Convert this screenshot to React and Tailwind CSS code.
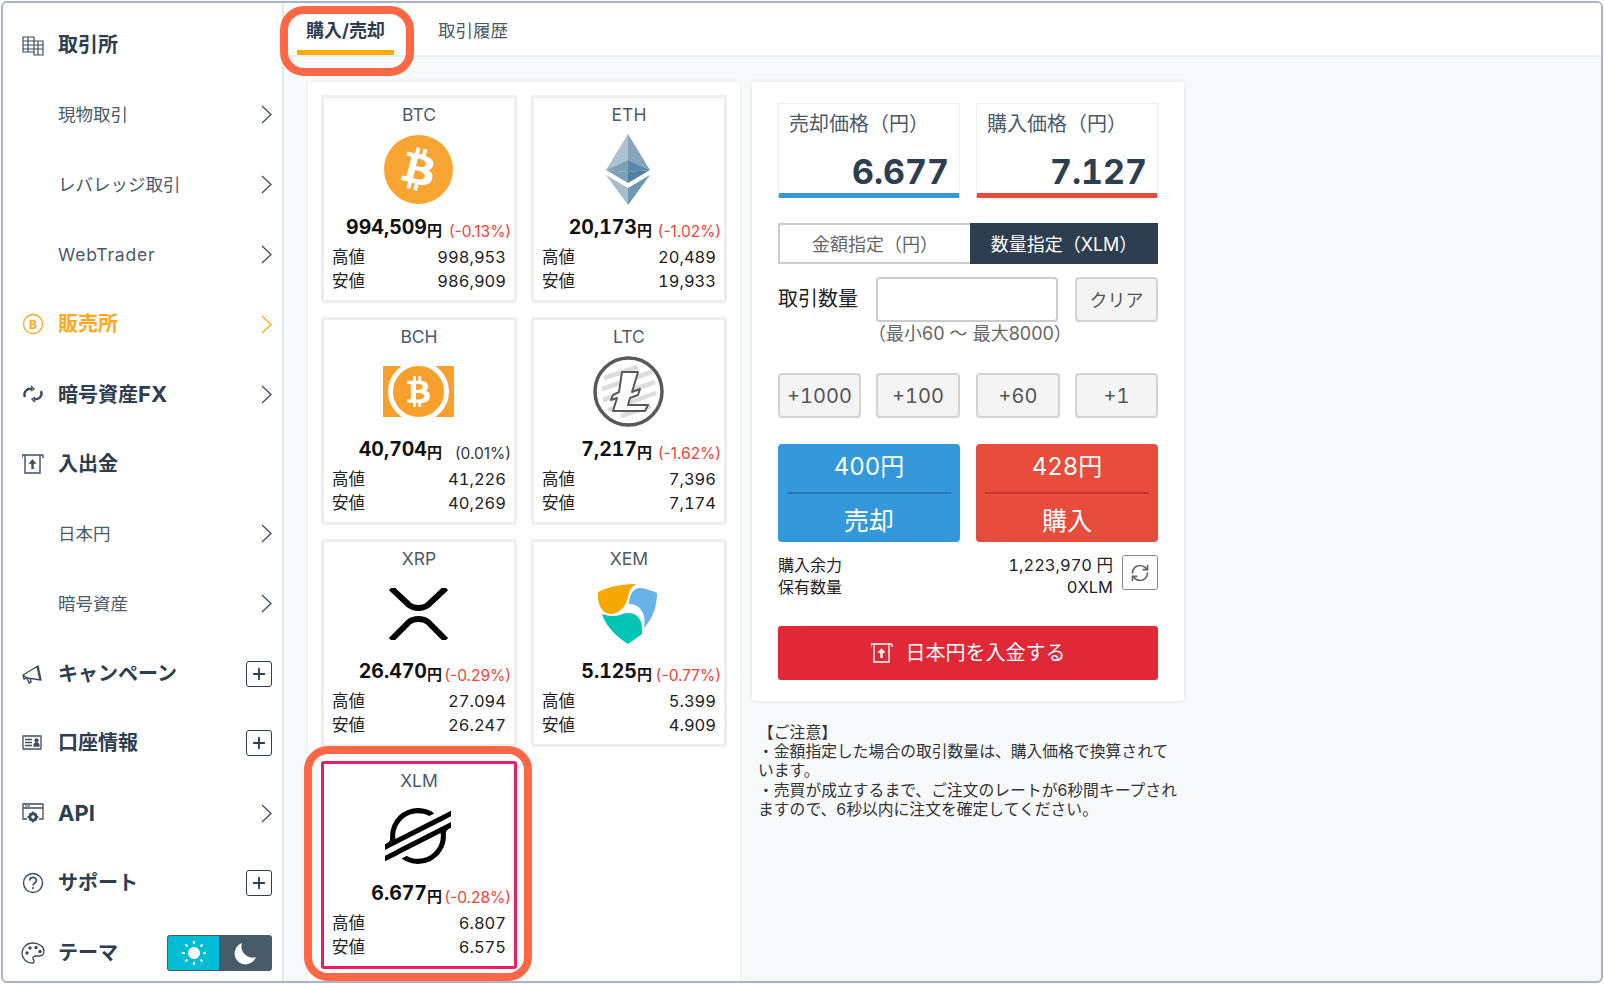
import React from 'react';
import { Plus, RefreshCw } from 'lucide-react';
import { FaBitcoin, FaBtc } from 'react-icons/fa';
import { SiStellar } from 'react-icons/si';

const IconExchange = () => (
  <svg width="22" height="22" viewBox="0 0 22 22" fill="none" stroke="#3d4f5f" strokeWidth="1.2">
    <path d="M1 3h11v15H1zM12 7h9v14h-9zM1 7h11M1 11h20M1 15h20M6 3v15M16 7v14" />
  </svg>
);
const IconCoin = () => (
  <svg width="22" height="22" viewBox="0 0 22 22" fill="none">
    <circle cx="11" cy="11" r="9.5" stroke="#ffa81c" strokeWidth="1.3" />
    <text x="11" y="15.5" textAnchor="middle" fontSize="12" fontWeight="700" fill="#ffa81c">B</text>
  </svg>
);
const IconSwap = () => (
  <svg width="22" height="22" viewBox="0 0 22 22" fill="none" stroke="#3d4f5f" strokeWidth="2.4">
    <path d="M3 14C1 9 5 5 10 6" />
    <path d="M19 8c2 5-2 9-7 8" />
    <path d="M9 3l3 3-3 2M13 19l-3-3 3-2" strokeWidth="1.4" />
  </svg>
);
const IconDeposit = ({ color = '#3d4f5f' }) => (
  <svg width="22" height="22" viewBox="0 0 22 22" fill="none" stroke={color} strokeWidth="1.4">
    <path d="M0 2h21M3 2v18h15V2M0 2v3M21 2v3" />
    <path d="M10.500 16V8" strokeWidth="2.400" />
    <path d="M7 10.500l3.500-4 3.500 4z" fill={color} strokeWidth="0.6" />
  </svg>
);
const IconMegaphone = () => (
  <svg width="22" height="22" viewBox="0 0 22 22" fill="none" stroke="#3d4f5f" strokeWidth="1.4">
    <path d="M1 12l15-9 3 14-14-2zM1 12l1 4 3-1M5 15l2 5 2-1-1-4M15 3l3 14" strokeLinejoin="round" />
  </svg>
);
const IconAccount = () => (
  <svg width="22" height="22" viewBox="0 0 22 22" fill="none" stroke="#3d4f5f" strokeWidth="1.3">
    <path d="M1 4h18v13H1zM3 7.500h7M3 10.500h7M3 13.500h7" />
    <circle cx="14.500" cy="8.500" r="1.500" fill="#3d4f5f" />
    <path d="M12 14c0-4 5-4 5 0z" fill="#3d4f5f" />
  </svg>
);
const IconApi = () => (
  <svg width="22" height="22" viewBox="0 0 22 22" fill="none" stroke="#3d4f5f" strokeWidth="1.3">
    <path d="M5 17H1V2h20v15h-4M1 6h20" />
    <path d="M3 4h5" strokeWidth="1" />
    <circle cx="11" cy="15" r="3.200" strokeWidth="3" />
    <path d="M11 9.500v2M11 18.500v2M5.500 15h2M14.500 15h2M7.500 11.500l1 1M14.500 18.500l-1-1M14.500 11.500l-1 1M7.500 18.500l1-1" strokeWidth="1.800" />
  </svg>
);
const IconHelp = () => (
  <svg width="22" height="22" viewBox="0 0 22 22" fill="none" stroke="#3d4f5f" strokeWidth="1.4">
    <circle cx="11" cy="11" r="9.500" />
    <path d="M7.800 8.500c0-4.200 6.600-4.200 6.600 0 0 2.400-3.300 2.400-3.300 5" strokeWidth="1.800" />
    <circle cx="11" cy="16" r="1.100" fill="#3d4f5f" stroke="none" />
  </svg>
);
const IconPalette = () => (
  <svg width="24" height="24" viewBox="0 0 24 24" fill="none" stroke="#3d4f5f" strokeWidth="1.3">
    <path d="M12 2C5 2 1 7 1 12c0 5 4 10 10 10 3 0 2-3 1-4-1-2 1-3 3-3h3c3 0 5-2 5-5 0-4-5-8-11-8z" />
    <g fill="#3d4f5f" stroke="none">
      <circle cx="6" cy="12" r="1.700" />
      <circle cx="9" cy="7" r="1.700" />
      <circle cx="15" cy="6.500" r="1.700" />
      <circle cx="19" cy="10.500" r="1.700" />
    </g>
  </svg>
);
const IconSun = () => (
  <svg width="26" height="26" viewBox="0 0 26 26" fill="#fff" stroke="#fff">
    <circle cx="13" cy="13" r="6" stroke="none" />
    <path d="M13 1v3M13 22v3M1 13h3M22 13h3M4.500 4.500l2 2M19.500 19.500l2 2M21.500 4.500l-2 2M6.500 19.500l-2 2" strokeWidth="2.200" />
  </svg>
);
const IconMoon = () => (
  <svg width="24" height="24" viewBox="0 0 24 24" fill="#fff">
    <path d="M9 2a11 11 0 1 0 14 14c-8 3-17-5-14-14z" />
  </svg>
);
const Chevron = ({ color }) => (
  <svg width="11" height="19" viewBox="0 0 11 19" fill="none" stroke={color} strokeWidth="1.300">
    <path d="M1 1l9 8.500L1 18" />
  </svg>
);

const EthLogo = () => (
  <svg width="44" height="71" viewBox="0 0 44 71">
    <path d="M22 0L0 36l22-10z" fill="#aec1cf" />
    <path d="M22 0l22 36-22-10z" fill="#85a5bc" />
    <path d="M0 36l22-10v12z" fill="#7e9fb8" />
    <path d="M44 36L22 26v12z" fill="#5c88a7" />
    <path d="M0 36l22 13V38z" fill="#6d95b2" opacity="0.9" />
    <path d="M44 36L22 49V38z" fill="#4f7fa1" />
    <path d="M0 41l22 30V54z" fill="#a5bccc" />
    <path d="M44 41L22 71V54z" fill="#6c98b5" />
  </svg>
);
const BchLogo = () => (
  <div className="relative w-[71px] h-[51px] bg-[#f9a02c] flex items-center justify-center">
    <div className="w-[61px] h-[61px] rounded-full bg-[#f9a02c] border-[5px] border-white shrink-0 -mx-[2px] flex items-center justify-center">
      <FaBtc size={31} className="text-white" />
    </div>
  </div>
);
const LtcLogo = () => (
  <svg width="71" height="71" viewBox="0 0 71 71">
    <circle cx="35.500" cy="35.500" r="33.500" fill="#fff" stroke="#58595b" strokeWidth="3.500" />
    <g stroke="#dcdcdc" strokeWidth="4.500">
      <path d="M11 22l34-11M9 33l50-17M10 44l52-18M15 54l48-17M28 60l30-10" />
    </g>
    <path d="M29 16h16l-6 20 8-3-2 6-8 3-2 7h20l-3 6H20l4-13-6 2 2-5 6-3z" fill="#fff" stroke="#58595b" strokeWidth="2" strokeLinejoin="round" />
  </svg>
);
const XrpLogo = () => (
  <svg width="61" height="52" viewBox="0 0 61 52" fill="none" stroke="#000" strokeWidth="6">
    <path d="M3 0l18 17c5 4 14 4 19 0L58 0" />
    <path d="M3 52l18-18c5-4 14-4 19 0l18 18" />
  </svg>
);
const XemLogo = () => (
  <svg width="60" height="60" viewBox="0 0 60 60">
    <path d="M0 8C12 2 26 0 38 0c-3 2-6 5-7 9-1 7-5 19-17 21C5 31-1 22 0 8z" fill="#f6a800" />
    <path d="M40 4c6 0 13 2 19 5 0 13-4 25-13 35 1-6 1-13-3-18-2-4-7-6-12-6 0-8 3-14 9-16z" fill="#67b2e8" />
    <path d="M4 30c6 2 12 3 18 1 4-2 9-3 14-1 6 3 9 9 8 20-5 4-10 7-14 10C19 53 8 43 4 30z" fill="#00c4b4" />
  </svg>
);

const navItems = [
  { label: '取引所', icon: <IconExchange />, bold: true },
  { label: '現物取引', more: 'chevron' },
  { label: 'レバレッジ取引', more: 'chevron' },
  { label: <span className="tracking-[0.8px]">WebTrader</span>, more: 'chevron' },
  { label: '販売所', icon: <IconCoin />, bold: true, active: true, more: 'chevron' },
  { label: <>暗号資産<span className="text-[22px]">FX</span></>, icon: <IconSwap />, bold: true, more: 'chevron' },
  { label: '入出金', icon: <IconDeposit />, bold: true },
  { label: '日本円', more: 'chevron' },
  { label: '暗号資産', more: 'chevron' },
  { label: 'キャンペーン', icon: <IconMegaphone />, bold: true, more: 'plus' },
  { label: '口座情報', icon: <IconAccount />, bold: true, more: 'plus' },
  { label: <span className="text-[22px]">API</span>, icon: <IconApi />, bold: true, more: 'chevron' },
  { label: 'サポート', icon: <IconHelp />, bold: true, more: 'plus' },
];

const coins = [
  { symbol: 'BTC', logo: <FaBitcoin size={71} className="text-[#f9a533]" />, price: '994,509', change: '(-0.13%)', high: '998,953', low: '986,909' },
  { symbol: 'ETH', logo: <EthLogo />, price: '20,173', change: '(-1.02%)', high: '20,489', low: '19,933' },
  { symbol: 'BCH', logo: <BchLogo />, price: '40,704', change: '(0.01%)', flat: true, high: '41,226', low: '40,269' },
  { symbol: 'LTC', logo: <LtcLogo />, price: '7,217', change: '(-1.62%)', high: '7,396', low: '7,174' },
  { symbol: 'XRP', logo: <XrpLogo />, price: '26.470', change: '(-0.29%)', high: '27.094', low: '26.247' },
  { symbol: 'XEM', logo: <XemLogo />, price: '5.125', change: '(-0.77%)', high: '5.399', low: '4.909' },
  { symbol: 'XLM', logo: <SiStellar size={66} className="text-black" />, price: '6.677', change: '(-0.28%)', high: '6.807', low: '6.575', selected: true },
];

const NavRow = ({ item }) => (
  <div className={`h-[69.85px] shrink-0 flex items-center pl-[19px] pr-[10px] ${item.active ? 'text-[#ffa81c]' : item.bold ? 'text-[#2c3e50]' : 'text-[#4a5a68]'}`}>
    <div className="w-[36px] shrink-0 flex items-center">{item.icon}</div>
    <span className={`flex-1 ${item.bold ? 'text-[20px] font-bold' : 'text-[17.500px] pt-px'}`}>{item.label}</span>
    {item.more === 'chevron' && <Chevron color={item.active ? '#ffa81c' : '#3d4f5f'} />}
    {item.more === 'plus' && (
      <div className="w-[26px] h-[26px] border-[1.5px] border-[#2c3e50] rounded-[3px] flex items-center justify-center">
        <Plus size={18} strokeWidth={2.5} className="text-[#2c3e50]" />
      </div>
    )}
  </div>
);

const CoinCard = ({ coin }) => (
  <div className={`relative h-[208px] rounded-[3px] border-[3px] ${coin.selected ? 'border-[#e91e63]' : 'border-[#eeeeee]'}`}>
    <div className="text-center text-[17.500px] leading-[24px] pt-[5px] text-[#4a5a68]">{coin.symbol}</div>
    <div className="mt-[7px] h-[71px] flex items-center justify-center overflow-hidden -translate-x-px">{coin.logo}</div>
    <div className="mt-[12px] h-[24px] flex justify-end items-baseline pr-[3px] leading-[24px] whitespace-nowrap">
      <span className="text-[19.500px] font-bold text-[#111111] -translate-y-[2px] tabular-nums">{coin.price}</span>
      <span className="text-[15px] font-bold text-[#111111]">円</span>
      <span className={`min-w-[69px] text-right text-[15.500px] translate-y-[1px] ${coin.flat ? 'text-[#333333]' : 'text-[#f44336]'}`}>{coin.change}</span>
    </div>
    <div className="mt-[4px] pl-[8px] pr-[8px] text-[16.500px] leading-[24px] text-[#222222] tabular-nums">
      <div className="flex justify-between"><span>高値</span><span>{coin.high}</span></div>
      <div className="flex justify-between"><span>安値</span><span>{coin.low}</span></div>
    </div>
    {coin.selected && <div className="absolute -left-[20px] -right-[18px] -top-[18px] -bottom-[15px] rounded-[24px] border-[8px] border-[#ff6745] pointer-events-none" />}
  </div>
);

const PriceBox = ({ label, value, barClass }) => (
  <div className={`w-[182px] h-[95px] border border-[#eeeeee] border-b-[5px] ${barClass} rounded-b-[2px] px-[10px]`}>
    <div className="text-[20px] leading-[40px] text-[#4a5a68]">{label}</div>
    <div className="text-[34px] leading-[48px] mt-[4px] font-bold text-[#2c3e50] text-right tabular-nums">{value}</div>
  </div>
);

const GrayButton = ({ className, children }) => (
  <button className={`h-[45px] bg-[#f4f4f4] border-2 border-[#d3d3d3] rounded-[4px] text-[#555555] tabular-nums ${className}`}>{children}</button>
);

const ActionButton = ({ amount, label, bg, line }) => (
  <button className={`w-[182px] h-[98px] rounded-[4px] text-white flex flex-col items-center ${bg}`}>
    <span className="text-[24px] leading-[46px] mb-[2px] tabular-nums">{amount}</span>
    <span className={`w-[164px] h-[2px] ${line}`} />
    <span className="text-[25px] h-[48px] leading-[54px]">{label}</span>
  </button>
);

export default function App() {
  return (
    <div className="w-[1604px] h-[984px] p-px bg-white font-['Inter','Noto_Sans_CJK_JP',sans-serif]">
      <div className="w-full h-full flex border-2 border-[#aab4c8] rounded-[6px] overflow-hidden bg-[#f8f9fb]">
        {/* Sidebar */}
        <aside className="w-[281px] shrink-0 bg-white border-r-2 border-[#e4e7ec] pt-[7px] flex flex-col">
          {navItems.map((item, i) => <NavRow key={i} item={item} />)}
          <div className="h-[69.85px] shrink-0 flex items-center pl-[18px] pr-[10px] text-[#2c3e50]">
            <div className="w-[37px] shrink-0"><IconPalette /></div>
            <span className="flex-1 text-[20px] font-bold">テーマ</span>
            <div className="w-[105px] h-[36px] flex bg-[#475b68] rounded-[3px] p-px">
              <div className="w-[51px] bg-[#00bcd4] flex items-center justify-center rounded-l-[2px]"><IconSun /></div>
              <div className="flex-1 flex items-center justify-center"><IconMoon /></div>
            </div>
          </div>
        </aside>

        <main className="flex-1 flex flex-col min-w-0">
          {/* Tabs */}
          <div className="h-[54px] shrink-0 bg-white border-b-2 border-[#eceef1] flex pl-[13px]">
            <div className="relative w-[97px] h-[52px] border-b-[5px] border-[#ffae00] text-center text-[18px] font-bold leading-[56px] text-[#2c3e50] whitespace-nowrap">
              購入/売却
              <div className="absolute -left-[17px] -right-[20px] top-[3px] -bottom-[26px] rounded-[24px] border-[8px] border-[#ff6745] pointer-events-none" />
            </div>
            <div className="ml-[44px] text-[17.500px] leading-[56px] text-[#4a5a68]">取引履歴</div>
          </div>

          <div className="flex-1 flex pl-[24px] pt-[25px] gap-[12px] min-h-0">
            {/* Coin list */}
            <section className="w-[432px] h-[960px] shrink-0 bg-white shadow-[0_0_4px_rgba(0,0,0,0.08)] rounded-[3px] pl-[13px] pt-[13px]">
              <div className="grid grid-cols-[196px_196px] gap-[14px]">
                {coins.map((coin) => <CoinCard key={coin.symbol} coin={coin} />)}
              </div>
            </section>

            <div className="w-[432px] shrink-0">
              {/* Order panel */}
              <section className="h-[619px] bg-white shadow-[0_0_5px_rgba(0,0,0,0.1)] rounded-[3px] px-[26px] pt-[21px]">
                <div className="flex justify-between">
                  <PriceBox label="売却価格（円）" value="6.677" barClass="border-b-[#3498db]" />
                  <PriceBox label="購入価格（円）" value="7.127" barClass="border-b-[#e74c3c]" />
                </div>

                <div className="mt-[25px] h-[41px] flex text-[18px]">
                  <div className="w-[192px] border-2 border-r-0 border-[#cccccc] text-[#666666] flex items-center justify-center pt-px">金額指定（円）</div>
                  <div className="flex-1 bg-[#2c3e50] text-white flex items-center justify-center pt-[2px]">数量指定（XLM）</div>
                </div>

                <div className="mt-[13px] flex">
                  <div className="w-[98px] text-[20px] leading-[44px] text-[#222222]">取引数量</div>
                  <div className="w-[182px]">
                    <div className="h-[45px] border-2 border-[#cccccc] rounded-[4px]" />
                    <div className="text-[18px] leading-[24px] text-[#666666] whitespace-nowrap -ml-[8px]">（最小60 〜 最大8000）</div>
                  </div>
                  <GrayButton className="w-[83px] ml-auto text-[18px] pt-[2px]">クリア</GrayButton>
                </div>

                <div className="mt-[27px] flex text-[20px]">
                  <GrayButton className="w-[83px]">+1000</GrayButton>
                  <GrayButton className="w-[84px] ml-[15px]">+100</GrayButton>
                  <GrayButton className="w-[84px] ml-[16px]">+60</GrayButton>
                  <GrayButton className="w-[83px] ml-[15px]">+1</GrayButton>
                </div>

                <div className="mt-[26px] flex justify-between">
                  <ActionButton amount="400円" label="売却" bg="bg-[#3498db]" line="bg-[#2a78ae]" />
                  <ActionButton amount="428円" label="購入" bg="bg-[#e74c3c]" line="bg-[#c0392b]" />
                </div>

                <div className="mt-[12px] flex text-[16px] leading-[22px] text-[#222222]">
                  <div className="flex-1">
                    <div>購入余力</div>
                    <div>保有数量</div>
                  </div>
                  <div className="text-right tabular-nums text-[16.500px]">
                    <div>1,223,970 円</div>
                    <div>0XLM</div>
                  </div>
                  <div className="ml-[9px] mt-px w-[36px] h-[35px] border border-[#888888] rounded-[3px] flex items-center justify-center">
                    <RefreshCw size={20} strokeWidth={2} className="text-[#666666]" />
                  </div>
                </div>

                <button className="mt-[28px] w-full h-[54px] bg-[#e02837] rounded-[3px] text-white text-[20px] flex items-center justify-center gap-[13px]">
                  <IconDeposit color="#ffffff" />
                  日本円を入金する
                </button>
              </section>

              {/* Notes */}
              <div className="mt-[22px] pl-[6px] text-[15.800px] leading-[19.200px] text-[#333333] whitespace-nowrap">
                <p>【ご注意】</p>
                <p>・金額指定した場合の取引数量は、購入価格で換算されて</p>
                <p>います。</p>
                <p>・売買が成立するまで、ご注文のレートが6秒間キープされ</p>
                <p>ますので、6秒以内に注文を確定してください。</p>
              </div>
            </div>
          </div>
        </main>
      </div>
    </div>
  );
}
